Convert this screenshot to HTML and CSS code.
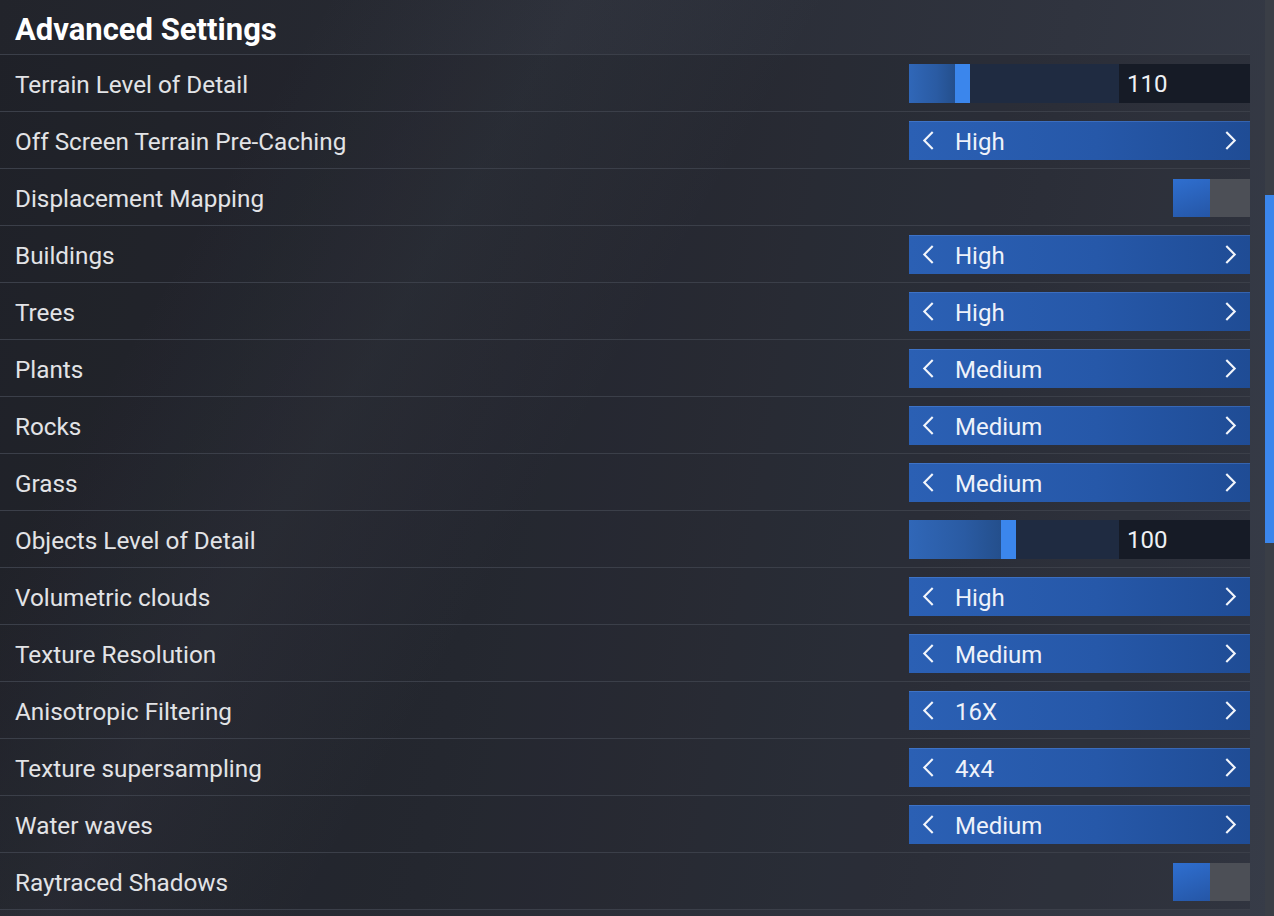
FILE: index.html
```html
<!DOCTYPE html>
<html lang="en">
<head>
  <meta charset="UTF-8">
  <title>Advanced Settings</title>
  <link rel="stylesheet" href="styles.css">
</head>
<body>
  <div class="page">
    <div class="settings">
      <h1 class="title">Advanced Settings</h1>

      <div class="row">
        <span class="label">Terrain Level of Detail</span>
        <div class="slider">
          <div class="track">
            <div class="fill fill-110"></div>
            <div class="handle"></div>
          </div>
          <div class="value">110</div>
        </div>
      </div>

      <div class="row">
        <span class="label">Off Screen Terrain Pre-Caching</span>
        <div class="picker">
          <svg class="chevron" viewBox="0 0 12 20"><path d="M10 2 L2 10 L10 18"/></svg>
          <span class="picker-text">High</span>
          <svg class="chevron" viewBox="0 0 12 20"><path d="M2 2 L10 10 L2 18"/></svg>
        </div>
      </div>

      <div class="row">
        <span class="label">Displacement Mapping</span>
        <div class="toggle"><div class="knob"></div></div>
      </div>

      <div class="row">
        <span class="label">Buildings</span>
        <div class="picker">
          <svg class="chevron" viewBox="0 0 12 20"><path d="M10 2 L2 10 L10 18"/></svg>
          <span class="picker-text">High</span>
          <svg class="chevron" viewBox="0 0 12 20"><path d="M2 2 L10 10 L2 18"/></svg>
        </div>
      </div>

      <div class="row">
        <span class="label">Trees</span>
        <div class="picker">
          <svg class="chevron" viewBox="0 0 12 20"><path d="M10 2 L2 10 L10 18"/></svg>
          <span class="picker-text">High</span>
          <svg class="chevron" viewBox="0 0 12 20"><path d="M2 2 L10 10 L2 18"/></svg>
        </div>
      </div>

      <div class="row">
        <span class="label">Plants</span>
        <div class="picker">
          <svg class="chevron" viewBox="0 0 12 20"><path d="M10 2 L2 10 L10 18"/></svg>
          <span class="picker-text">Medium</span>
          <svg class="chevron" viewBox="0 0 12 20"><path d="M2 2 L10 10 L2 18"/></svg>
        </div>
      </div>

      <div class="row">
        <span class="label">Rocks</span>
        <div class="picker">
          <svg class="chevron" viewBox="0 0 12 20"><path d="M10 2 L2 10 L10 18"/></svg>
          <span class="picker-text">Medium</span>
          <svg class="chevron" viewBox="0 0 12 20"><path d="M2 2 L10 10 L2 18"/></svg>
        </div>
      </div>

      <div class="row">
        <span class="label">Grass</span>
        <div class="picker">
          <svg class="chevron" viewBox="0 0 12 20"><path d="M10 2 L2 10 L10 18"/></svg>
          <span class="picker-text">Medium</span>
          <svg class="chevron" viewBox="0 0 12 20"><path d="M2 2 L10 10 L2 18"/></svg>
        </div>
      </div>

      <div class="row">
        <span class="label">Objects Level of Detail</span>
        <div class="slider">
          <div class="track">
            <div class="fill fill-100"></div>
            <div class="handle"></div>
          </div>
          <div class="value">100</div>
        </div>
      </div>

      <div class="row">
        <span class="label">Volumetric clouds</span>
        <div class="picker">
          <svg class="chevron" viewBox="0 0 12 20"><path d="M10 2 L2 10 L10 18"/></svg>
          <span class="picker-text">High</span>
          <svg class="chevron" viewBox="0 0 12 20"><path d="M2 2 L10 10 L2 18"/></svg>
        </div>
      </div>

      <div class="row">
        <span class="label">Texture Resolution</span>
        <div class="picker">
          <svg class="chevron" viewBox="0 0 12 20"><path d="M10 2 L2 10 L10 18"/></svg>
          <span class="picker-text">Medium</span>
          <svg class="chevron" viewBox="0 0 12 20"><path d="M2 2 L10 10 L2 18"/></svg>
        </div>
      </div>

      <div class="row">
        <span class="label">Anisotropic Filtering</span>
        <div class="picker">
          <svg class="chevron" viewBox="0 0 12 20"><path d="M10 2 L2 10 L10 18"/></svg>
          <span class="picker-text">16X</span>
          <svg class="chevron" viewBox="0 0 12 20"><path d="M2 2 L10 10 L2 18"/></svg>
        </div>
      </div>

      <div class="row">
        <span class="label">Texture supersampling</span>
        <div class="picker">
          <svg class="chevron" viewBox="0 0 12 20"><path d="M10 2 L2 10 L10 18"/></svg>
          <span class="picker-text">4x4</span>
          <svg class="chevron" viewBox="0 0 12 20"><path d="M2 2 L10 10 L2 18"/></svg>
        </div>
      </div>

      <div class="row">
        <span class="label">Water waves</span>
        <div class="picker">
          <svg class="chevron" viewBox="0 0 12 20"><path d="M10 2 L2 10 L10 18"/></svg>
          <span class="picker-text">Medium</span>
          <svg class="chevron" viewBox="0 0 12 20"><path d="M2 2 L10 10 L2 18"/></svg>
        </div>
      </div>

      <div class="row">
        <span class="label">Raytraced Shadows</span>
        <div class="toggle"><div class="knob"></div></div>
      </div>
    </div>

    <div class="scrollbar">
      <div class="thumb"></div>
    </div>
  </div>
</body>
</html>
```

FILE: styles.css
```css
html, body {
  height: 100%;
}

body {
  margin: 0;
  overflow: hidden;
  font-family: Roboto, "Liberation Sans", sans-serif;
  color: #e4e5e8;
  background:
    linear-gradient(120deg, rgba(255, 255, 255, 0) 18%, rgba(130, 140, 160, 0.07) 32%, rgba(255, 255, 255, 0) 46%),
    linear-gradient(100deg, #22242b 0%, #282b34 40%, #30343f 75%, #373c48 100%);
}

.page {
  display: flex;
  height: 100%;
}

.settings {
  width: 1250px;
  flex-shrink: 0;
}

.title {
  margin: 0;
  height: 55px;
  box-sizing: border-box;
  padding: 11px 0 0 15px;
  font-size: 31px;
  font-weight: 700;
  color: #fff;
  border-bottom: 1px solid #3b3f49;
}

.row {
  display: flex;
  align-items: center;
  justify-content: space-between;
  height: 55px;
  padding-top: 1px;
  border-bottom: 1px solid #3b3f49;
  background: rgba(20, 22, 28, 0.18);
}

.label {
  padding: 2px 0 0 15px;
  font-size: 24.3px;
  color: #e2e3e6;
}

/* blue option picker */
.picker {
  display: flex;
  align-items: center;
  width: 341px;
  height: 39px;
  box-sizing: border-box;
  padding: 0 13px 0 13px;
  background: linear-gradient(90deg, #2b60b4 0%, #2658a9 55%, #1f4c95 100%);
  box-shadow: inset 0 1px 0 rgba(120, 170, 255, 0.25);
}

.picker-text {
  flex: 1;
  padding: 2px 0 0 20px;
  font-size: 24px;
  color: #eef2fa;
}

.chevron {
  width: 13px;
  height: 21px;
  fill: none;
  stroke: #f2f5fb;
  stroke-width: 2;
}

/* slider with number box */
.slider {
  display: flex;
  width: 341px;
  height: 39px;
}

.track {
  display: flex;
  width: 210px;
  background: #1f2b41;
}

.fill {
  background: linear-gradient(90deg, #3067b8, #2a5ba3 60%, #244f8c);
}

.fill-110 {
  width: 46px;
}

.fill-100 {
  width: 92px;
}

.handle {
  width: 15px;
  background: #3b86ec;
}

.value {
  flex: 1;
  background: #161b26;
  padding: 1px 0 0 8px;
  font-size: 24px;
  line-height: 38px;
  color: #eef0f4;
}

/* on/off switch */
.toggle {
  width: 77px;
  height: 38px;
  background: #4c4f56;
}

.knob {
  width: 37px;
  height: 38px;
  background: linear-gradient(160deg, #2f6fd0, #2556a6);
}

.scrollbar {
  margin-left: 15px;
  width: 9px;
  background: #3a3e46;
}

.thumb {
  margin-top: 195px;
  height: 348px;
  background: #3b86ec;
}
```
